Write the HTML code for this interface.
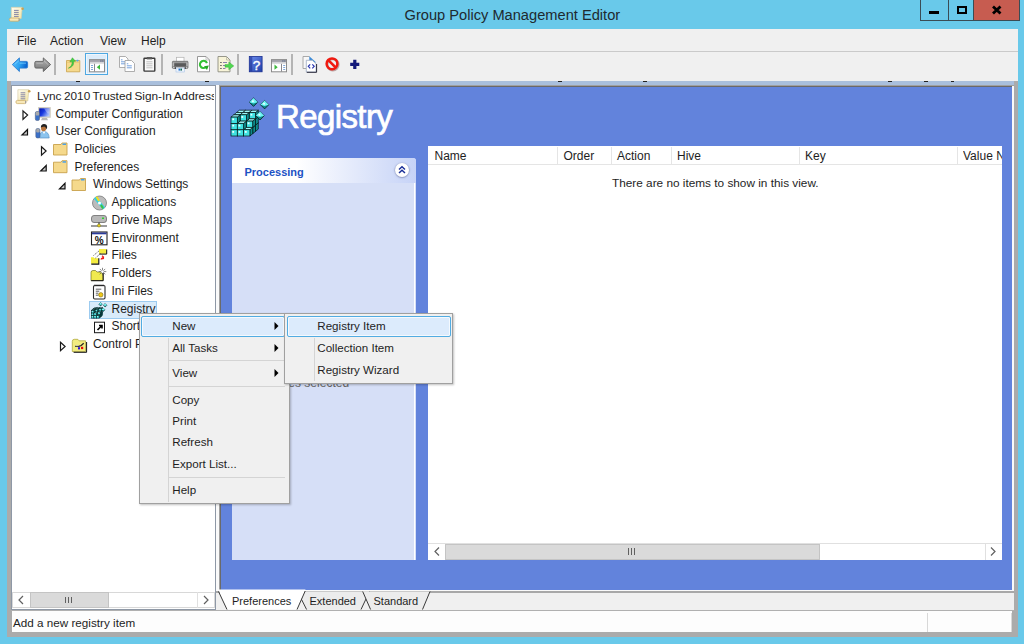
<!DOCTYPE html>
<html><head><meta charset="utf-8">
<style>
*{box-sizing:border-box;margin:0;padding:0}
html,body{width:1024px;height:644px;overflow:hidden;background:#69c9ea;font-family:"Liberation Sans",sans-serif;font-size:12px;color:#000}
.a{position:absolute}
.t{position:absolute;white-space:nowrap;line-height:14px;color:#1e1e1e}
svg{position:absolute;overflow:visible}
</style></head><body>
<!-- ============ TITLE BAR ============ -->
<svg style="left:0;top:0" width="30" height="29">
  <defs><linearGradient id="gsc" x1="0" y1="0" x2="1" y2="1"><stop offset="0" stop-color="#fffdf2"/><stop offset="1" stop-color="#f3e3a0"/></linearGradient></defs>
  <g id="scroll">
  <path d="M11.3 7.3 H22.3 L21.2 18.5 H11.3 Z" fill="url(#gsc)" stroke="#d9cfa8" stroke-width="0.7"/>
  <circle cx="22.6" cy="8.8" r="1.3" fill="#caa050"/>
  <rect x="9.3" y="18" width="10.2" height="3.2" rx="1.5" fill="#f7e8b8" stroke="#c9a860" stroke-width="0.7"/>
  <path d="M19 18.5 V21" stroke="#8a8aa0" stroke-width="0.8"/>
  <path d="M14 10.4h4.7 M14 12.4h4.7 M14 14.4h4.7 M14 16.4h4.7" stroke="#8585a5" stroke-width="1"/>
  </g>
</svg>
<div class="t" style="left:404.5px;top:5.6px;font-size:14.65px;line-height:18px;color:#1e2a30">Group Policy Management Editor</div>
<div class="a" style="left:920px;top:0;width:29px;height:21px;border:1px solid #3a4c55;border-top:none;background:#69c9ea"></div>
<div class="a" style="left:949px;top:0;width:25px;height:21px;border:1px solid #3a4c55;border-top:none;border-left:none;background:#69c9ea"></div>
<div class="a" style="left:974px;top:0;width:46px;height:21px;border:1px solid #3a4c55;border-top:none;border-left:none;background:#c75c50"></div>
<div class="a" style="left:929px;top:11px;width:10px;height:3px;background:#000"></div>
<div class="a" style="left:957px;top:6px;width:10px;height:8px;border:2px solid #000"></div>
<svg style="left:990px;top:5px" width="14" height="10"><path d="M3 1.5 L10.5 8.5 M10.5 1.5 L3 8.5" stroke="#000" stroke-width="2.8"/></svg>

<!-- ============ FRAME ============ -->
<div class="a" style="left:7px;top:29px;width:1011px;height:608px;background:#ababab"></div>
<!-- menu bar -->
<div class="a" style="left:7px;top:29px;width:1011px;height:22px;background:#f0f0f0"></div>
<div class="a" style="left:7px;top:51px;width:1011px;height:1.5px;background:#cacaca"></div>
<div class="t" style="left:17px;top:33.5px">File</div>
<div class="t" style="left:50px;top:33.5px">Action</div>
<div class="t" style="left:100px;top:33.5px">View</div>
<div class="t" style="left:141px;top:33.5px">Help</div>
<!-- toolbar -->
<div class="a" style="left:7px;top:52px;width:1011px;height:29px;background:#f0f0f0"></div>
<div class="a" style="left:11px;top:81px;width:1003px;height:4px;background:#a9bfdc"></div>
<div class="a" style="left:76px;top:81px;width:4px;height:1px;background:#222"></div>
<div class="a" style="left:205px;top:81px;width:4px;height:1px;background:#222"></div>
<div class="a" style="left:558px;top:81px;width:4px;height:1px;background:#222"></div>
<div class="a" style="left:643px;top:81px;width:4px;height:1px;background:#222"></div>
<div class="a" style="left:888px;top:81px;width:4px;height:1px;background:#222"></div>
<div class="a" style="left:924px;top:81px;width:4px;height:1px;background:#222"></div>
<div class="a" style="left:951px;top:81px;width:3px;height:1px;background:#222"></div>
<!-- separators -->
<div class="a" style="left:54px;top:54px;width:2px;height:21px;background:#b4b4b4"></div>
<div class="a" style="left:161px;top:54px;width:2px;height:21px;background:#b4b4b4"></div>
<div class="a" style="left:237px;top:54px;width:2px;height:21px;background:#b4b4b4"></div>
<div class="a" style="left:291px;top:54px;width:2px;height:21px;background:#b4b4b4"></div>
<!-- selected toolbar button -->
<div class="a" style="left:85px;top:53.2px;width:23px;height:21.8px;border:1.5px solid #4ea8e2;background:#dcecfa;box-shadow:inset 0 0 0 1px #eef6fd"></div>

<svg style="left:0;top:0" width="400" height="85">
  <defs>
    <linearGradient id="gb2" x1="0" y1="0" x2="1" y2="0.3"><stop offset="0" stop-color="#5cc4ff"/><stop offset="0.6" stop-color="#2aa0f0"/><stop offset="1" stop-color="#0a64d0"/></linearGradient>
    <linearGradient id="gg" x1="0" y1="0" x2="0" y2="1"><stop offset="0" stop-color="#b8b8b8"/><stop offset="1" stop-color="#707070"/></linearGradient>
    <linearGradient id="gh" x1="0" y1="0" x2="1" y2="1"><stop offset="0" stop-color="#6f8ff0"/><stop offset="1" stop-color="#1f3fa8"/></linearGradient>
  </defs>
  <!-- back -->
  <path d="M12.3 64.6 L19.4 57.9 V61.4 H26.3 Q27.6 61.4 27.6 62.7 V66.8 Q27.6 68.1 26.3 68.1 H19.4 V71.5 Z" fill="url(#gb2)" stroke="#2a7cd0" stroke-width="0.9"/>
  <path d="M15 64.2 L19 60.6 M19.6 63.2 H26" stroke="#8ad8ff" stroke-width="0.8" opacity="0.8"/>
  <!-- forward -->
  <path d="M50.6 64.6 L43.3 57.9 V61.4 H36.1 Q34.8 61.4 34.8 62.7 V66.8 Q34.8 68.1 36.1 68.1 H43.3 V71.5 Z" fill="url(#gg)" stroke="#5e5e5e" stroke-width="0.9"/>
  <path d="M36.5 63.3 H43 M44 61 L48 64.5" stroke="#c4c4c4" stroke-width="0.8" opacity="0.7"/>
  <!-- up folder -->
  <path d="M66.5 60.5 h13.3 v11.3 h-13.3 z" fill="#f6d98c" stroke="#c9a24a" stroke-width="0.8"/>
  <path d="M66.9 62.3 h12.5" stroke="#e8c470" stroke-width="0.8"/>
  <rect x="76.3" y="59.7" width="2.4" height="1.7" rx="0.8" fill="#58a8e8"/>
  <path d="M68.3 68.2 C70.8 66.8, 72.4 65, 72 61.6 L69.8 62 L72.4 57.7 L75.6 61.3 L73.5 61.5 C74.2 65.5, 71.5 67.6, 68.3 68.2 Z" fill="#44d044" stroke="#2a9a2a" stroke-width="0.4"/>
  <!-- window w/ left triangle -->
  <rect x="89.5" y="59.6" width="15" height="12.2" fill="#fff" stroke="#8a8a8a" stroke-width="1"/>
  <rect x="90" y="60.1" width="14" height="1.8" fill="#9a9aa2"/>
  <rect x="90" y="61.9" width="14" height="1.8" fill="#d4d4d8"/>
  <rect x="100.3" y="60.4" width="1.2" height="1.2" fill="#5a6a8a"/><rect x="102.2" y="60.4" width="1.2" height="1.2" fill="#5a6a8a"/>
  <path d="M94.5 63.8 V71.5" stroke="#7a7a82" stroke-width="0.9"/>
  <path d="M91 65.5h2 M91 67.5h2 M91 69.5h2" stroke="#5b8fd0" stroke-width="0.8"/>
  <path d="M100 64.5 V69.8 L96.8 67.2 Z" fill="#3cb83c"/>
  <!-- copy -->
  <path d="M119.5 56.5 h6 l2.5 2.5 v8.5 h-8.5 z" fill="#fff" stroke="#9a9a9a" stroke-width="0.8"/>
  <path d="M121 59.8h1.5 M121 61.8h4 M121 63.8h4" stroke="#3a7ad0" stroke-width="0.7"/>
  <path d="M125 60.5 h6.5 l3 3 v8 h-9.5 z" fill="#fff" stroke="#9a9a9a" stroke-width="0.8"/>
  <path d="M126.8 63.8h1.5 M126.8 65.8h5 M126.8 67.8h5" stroke="#3a7ad0" stroke-width="0.7"/>
  <!-- paste clipboard -->
  <rect x="144" y="58.3" width="10.8" height="12.8" rx="0.5" fill="#fafafa" stroke="#383838" stroke-width="1.4"/>
  <rect x="146.8" y="57" width="5.2" height="2.4" fill="#5a5a5a"/>
  <path d="M146.3 61.8h6.2 M146.3 63.8h6.2 M146.3 65.8h6.2 M146.3 67.8h6.2" stroke="#a8a8a8" stroke-width="0.7"/>
  <!-- printer -->
  <rect x="176.5" y="57.3" width="7.5" height="4.5" fill="#fff" stroke="#b0b0b0" stroke-width="0.7"/>
  <rect x="172.3" y="61.2" width="15.8" height="7.2" rx="0.8" fill="#5a5a5a" stroke="#6a6a6a" stroke-width="0.5"/>
  <rect x="173" y="61.6" width="14.4" height="1.6" fill="#9a9a9a"/>
  <rect x="172.6" y="62.5" width="1.6" height="4" fill="#b8b8b8"/><rect x="186.2" y="62.5" width="1.6" height="4" fill="#b8b8b8"/>
  <rect x="173" y="66.8" width="14.4" height="1.4" fill="#c8c8c8"/>
  <rect x="176" y="68" width="8.5" height="4" fill="#eef4fc" stroke="#a8c4e8" stroke-width="0.6"/>
  <rect x="178.5" y="68.6" width="1.6" height="2" fill="#2a7ad0"/><rect x="180.4" y="68.6" width="1.6" height="2" fill="#1a6a5a"/>
  <circle cx="175.3" cy="68" r="0.7" fill="#111"/><circle cx="185.2" cy="68" r="0.7" fill="#111"/>
  <!-- refresh doc -->
  <path d="M197.5 56.5 h8.5 l3.5 3.5 v11.8 h-12 z" fill="#fff" stroke="#8c8c8c" stroke-width="0.9"/>
  <path d="M206 56.5 v3.5 h3.5" fill="none" stroke="#b0b0b0" stroke-width="0.7"/>
  <path d="M205.8 67.2 A3.6 3.6 0 1 1 206.9 63.2" fill="none" stroke="#34c034" stroke-width="2.1"/>
  <path d="M204 66.2 L208.8 65.6 L207 70 Z" fill="#22a822"/>
  <!-- export list -->
  <path d="M218 56.5 h8.5 l3.5 3.5 v11.8 h-12 z" fill="#f8f4d8" stroke="#8c8c80" stroke-width="0.9"/>
  <path d="M226.5 56.5 v3.5 h3.5" fill="none" stroke="#b0b0a0" stroke-width="0.7"/>
  <path d="M220.3 62.5h1.3 M220.3 65.5h1.3 M220.3 68.5h1.3" stroke="#444" stroke-width="1"/>
  <path d="M223 62.5h4 M223 65.5h2.5 M223 68.5h2.5" stroke="#8a80b0" stroke-width="1"/>
  <path d="M225 64.6 h3.8 v-2.6 l5 3.9 l-5 3.9 v-2.6 h-3.8 z" fill="#50d850" stroke="#2aa02a" stroke-width="0.4"/>
  <!-- help book -->
  <rect x="249.3" y="56.5" width="12.8" height="15.3" fill="url(#gh)" stroke="#1a2f90" stroke-width="0.8"/>
  <rect x="249.7" y="56.9" width="2.6" height="14.5" fill="#16288a" opacity="0.55"/>
  <text x="256.6" y="69.6" font-family="Liberation Sans" font-size="13.5" stroke="#fff" stroke-width="0.4" fill="#fff" text-anchor="middle">?</text>
  <!-- action pane -->
  <rect x="271.5" y="59.6" width="15" height="12.2" fill="#fff" stroke="#8a8a8a" stroke-width="1"/>
  <rect x="272" y="60.1" width="14" height="1.8" fill="#9a9aa2"/>
  <rect x="272" y="61.9" width="14" height="1.8" fill="#d4d4d8"/>
  <rect x="282.3" y="60.4" width="1.2" height="1.2" fill="#5a6a8a"/><rect x="284.2" y="60.4" width="1.2" height="1.2" fill="#5a6a8a"/>
  <path d="M281.5 63.8 V71.5" stroke="#7a7a82" stroke-width="0.9"/>
  <path d="M283.2 65.5h2 M283.2 67.5h2 M283.2 69.5h2" stroke="#5b8fd0" stroke-width="0.8"/>
  <path d="M274.5 64.5 V69.8 L277.7 67.2 Z" fill="#3cb83c"/>
  <!-- doc <> -->
  <path d="M306 68.5 h-3 V56.5 h6.5" fill="#f8f8f8" stroke="#a0a0a0" stroke-width="0.9"/>
  <path d="M309.3 56.3 L316.2 62.5 H309.3 Z" fill="#3a8ad8"/>
  <path d="M306.3 60.3 h6 l3.8 3.5 v8.2 h-9.8 z" fill="#fff" stroke="#9aa8c0" stroke-width="0.8"/>
  <path d="M306.8 72.3 h9.8 v-8.3" fill="none" stroke="#2a2a3a" stroke-width="1"/>
  <path d="M310.2 64.3 l-1.9 2 l1.9 2 M312.3 64.3 l1.9 2 l-1.9 2" fill="none" stroke="#2a36b0" stroke-width="1.2"/>
  <!-- red stop -->
  <circle cx="332.8" cy="64.6" r="5.6" fill="none" stroke="#7a4a4a" stroke-width="2.4" opacity="0.45"/>
  <circle cx="332" cy="63.8" r="5.4" fill="none" stroke="#f01a10" stroke-width="2.5"/>
  <path d="M328.3 60.1 L335.7 67.5" stroke="#f01a10" stroke-width="2.5"/>
  <!-- plus -->
  <path d="M350.2 64.3 H359.3 M354.8 59.8 V68.9" stroke="#141a7a" stroke-width="3.2"/>
</svg>

<!-- ============ LEFT PANE ============ -->
<div class="a" style="left:11px;top:85px;width:205px;height:525px;background:#fff;border:1px solid #8e98a6"></div>
<div class="a" style="left:216px;top:85px;width:3px;height:526px;background:#fafafa"></div>

<!-- tree -->
<div id="tree">
<div class="t" style="left:37px;top:88.9px;width:177px;overflow:hidden;font-size:11.8px;word-spacing:-0.8px">Lync 2010 Trusted Sign-In Address</div>
<div class="t" style="left:55.5px;top:106.5px">Computer Configuration</div>
<div class="t" style="left:55.5px;top:124.2px">User Configuration</div>
<div class="t" style="left:74.5px;top:141.9px">Policies</div>
<div class="t" style="left:74.5px;top:159.6px">Preferences</div>
<div class="t" style="left:93px;top:177.3px">Windows Settings</div>
<div class="t" style="left:111.5px;top:195.1px">Applications</div>
<div class="t" style="left:111.5px;top:212.8px">Drive Maps</div>
<div class="t" style="left:111.5px;top:230.5px">Environment</div>
<div class="t" style="left:111.5px;top:248.2px">Files</div>
<div class="t" style="left:111.5px;top:266px">Folders</div>
<div class="t" style="left:111.5px;top:283.7px">Ini Files</div>
<div class="a" style="left:89px;top:301px;width:68px;height:17.5px;background:#d9ebfa;border:1px solid #9ccbf0"></div>
<div class="t" style="left:111.5px;top:301.5px">Registry</div>
<div class="t" style="left:111.5px;top:319.1px">Shortcuts</div>
<div class="t" style="left:93px;top:336.9px">Control Panel Settings</div>
</div>

<svg style="left:0;top:0" width="220" height="360">
  <!-- expanders -->
  <path d="M23 110.9 L27.6 115.1 L23 119.3 Z" fill="none" stroke="#1a1a1a" stroke-width="1.2"/>
  <path d="M27.5 129.5 V135 H22 Z" fill="#c8c8c8" stroke="#111" stroke-width="1.2"/>
  <path d="M41.5 146.8 L46.1 151 L41.5 155.2 Z" fill="none" stroke="#1a1a1a" stroke-width="1.2"/>
  <path d="M46.2 165.5 V171 H40.7 Z" fill="#c8c8c8" stroke="#111" stroke-width="1.2"/>
  <path d="M65 183.3 V188.8 H59.5 Z" fill="#c8c8c8" stroke="#111" stroke-width="1.2"/>
  <path d="M60.5 342.3 L65.1 346.5 L60.5 350.7 Z" fill="none" stroke="#1a1a1a" stroke-width="1.2"/>
  <!-- scroll icon -->
  <use href="#scroll" x="6.6" y="82.4"/>
  <!-- computer -->
  <defs><linearGradient id="gscr" x1="0" y1="0" x2="1" y2="0.6"><stop offset="0" stop-color="#0010a8"/><stop offset="0.5" stop-color="#1a3ae0"/><stop offset="1" stop-color="#b0c8ff"/></linearGradient></defs>
  <rect x="38.6" y="107.7" width="11.6" height="9.5" fill="url(#gscr)" stroke="#d4d0c0" stroke-width="1.2"/>
  <path d="M44 108.5 l3.5 5 h2 v-5z" fill="#fff" opacity="0.35"/>
  <path d="M42 118 h5 l1 2.2 h-7z" fill="#b8b8b8"/>
  <rect x="35.3" y="111.5" width="4.2" height="9" rx="1.6" fill="#3a70c8" stroke="#4a5a78" stroke-width="0.5"/>
  <rect x="35.7" y="111.8" width="3.4" height="3.8" rx="1.2" fill="#a8a8a8"/>
  <!-- user -->
  <path d="M39.5 138 q-0.5 -6 4.5 -6.8 q5 0.8 5.2 6.8 z" fill="#8cc4ee" stroke="#4a88c0" stroke-width="0.6"/>
  <path d="M42.5 131.5 l1.5 2.5 l1.5 -2.5" fill="#fff"/>
  <ellipse cx="43.6" cy="128" rx="2.6" ry="3.2" fill="#b8743c"/>
  <path d="M40.8 127.5 q0.2 -3.6 3.2 -3.6 q3 0 3.2 3.2 l-0.6 2.4 q-0.6 -2.6 -2.4 -3 q-2 0.4 -3.4 1z" fill="#222"/>
  <rect x="35.8" y="128.5" width="4.2" height="9.5" rx="1.6" fill="#3a70c8" stroke="#4a5a78" stroke-width="0.5"/>
  <rect x="36.2" y="128.8" width="3.4" height="3.6" rx="1.2" fill="#a8a8a8"/>
  <!-- folders -->
  <g id="fold">
  <path d="M53.5 144.5 h7.5 l1 -1.5 h5 v12 h-13.5 z" fill="#f5d98c" stroke="#c8a24c" stroke-width="0.9"/>
  <rect x="62.5" y="143.5" width="3.5" height="1.5" fill="#4aa0e8"/>
  </g>
  <use href="#fold" y="17.7"/>
  <use href="#fold" x="18.5" y="35.5"/>
  <!-- CD -->
  <circle cx="99.5" cy="203" r="7" fill="#bcbcbc" stroke="#7a7a7a" stroke-width="0.8"/>
  <path d="M95 197.5 L104 208.5" stroke="#36d0e0" stroke-width="3"/>
  <path d="M96.5 196.8 L99 201" stroke="#f0e020" stroke-width="2"/>
  <path d="M101 205 L103 208.5" stroke="#40c040" stroke-width="2"/>
  <circle cx="99.5" cy="203" r="1.5" fill="#fff"/>
  <!-- drive maps -->
  <rect x="91.5" y="215.5" width="15" height="7" rx="2.5" fill="#b8b8b8" stroke="#6a6a6a" stroke-width="0.8"/>
  <rect x="102" y="217.5" width="2" height="1.5" fill="#30d030"/>
  <path d="M99 222.5 V225 M91 226 H107" stroke="#3a3a3a" stroke-width="1.2"/>
  <circle cx="99" cy="225.5" r="1.6" fill="#e8d020" stroke="#6a6a20" stroke-width="0.5"/>
  <!-- environment -->
  <rect x="91.5" y="232" width="15.5" height="12.8" fill="#fff" stroke="#222" stroke-width="1.1"/>
  <rect x="92" y="232.5" width="14.5" height="1.8" fill="#2a3a9a"/>
  <text x="99.3" y="243.8" font-family="Liberation Sans" font-size="10" font-weight="bold" fill="#111" text-anchor="middle">%</text>
  <!-- files -->
  <path d="M99 249 h7.5 v4.8 h-7.5 z" fill="#f4ec40"/>
  <path d="M106.7 249.5 v4.6 h-7.5" fill="none" stroke="#111" stroke-width="1"/>
  <path d="M91 257.3 h2.5 l1 1 h4 v5.5 h-7.5 z" fill="#f4ec40"/>
  <path d="M98.8 258.3 v5.8 h-7.5" fill="none" stroke="#111" stroke-width="1.1"/>
  <path d="M93.5 255.5 L99.5 250.5 M95.5 258 L100.5 253.5" stroke="#444" stroke-width="0.9" stroke-dasharray="1 1"/>
  <path d="M101 259 l2 -1.5 M102 255.8 l1.5 1.2 l-1.5 1.8 l2 -0.5" fill="none" stroke="#f01818" stroke-width="1.2"/>
  <!-- folders sparkle -->
  <path d="M91 272.5 q0 -2 2 -2 h2.5 l1.5 1.5 h3.5 l2.5 2 v6.6 h-12 z" fill="#f0ea50" stroke="#5a5a10" stroke-width="0.6"/>
  <path d="M103.2 272.5 v8.2 h-12" fill="none" stroke="#111" stroke-width="1"/>
  <path d="M102.5 267.8 v7.6 M98.7 271.6 h7.6 M99.8 268.9 l5.4 5.4 M105.2 268.9 l-5.4 5.4" stroke="#555" stroke-width="0.7"/>
  <circle cx="102.5" cy="271.6" r="1.3" fill="#fff"/>
  <!-- ini files -->
  <rect x="93.5" y="285.5" width="11.5" height="13.5" rx="1.2" fill="#fff" stroke="#2a2a2a" stroke-width="1.1"/>
  <path d="M95 284.3 v2.2 M97 284.3 v2.2 M99 284.3 v2.2 M101 284.3 v2.2 M103 284.3 v2.2" stroke="#2a2a2a" stroke-width="0.7"/>
  <path d="M95.8 289.2h5.5 M95.8 291.2h3.5 M95.8 293.2h2.5 M95.8 295.2h2.5" stroke="#333" stroke-width="0.8"/>
  <circle cx="100.8" cy="294.8" r="2.2" fill="#f0c818" stroke="#7a6a10" stroke-width="0.6"/>
  <!-- shortcut -->
  <rect x="94.5" y="322.2" width="10" height="10.5" fill="#fff" stroke="#1a1a1a" stroke-width="1"/>
  <path d="M97.5 330 L101.5 326 M99 325.5 h3 v3" stroke="#000" stroke-width="1.6" fill="none"/>
  <!-- control panel folder -->
  <path d="M72.3 341.5 q0 -2.2 2 -2.2 h3.5 l1.2 1.5 h6.5 v10.7 h-13.2 z" fill="#f2ec80" stroke="#a8a030" stroke-width="0.7"/>
  <path d="M86.6 342 v10.3 h-13" fill="none" stroke="#111" stroke-width="1"/>
  <path d="M75.2 346.3 h3.5 l2.5 -0.8 l2.5 -2.2" fill="none" stroke="#222" stroke-width="1.3"/>
  <path d="M76 345.8 h2.5" stroke="#ddd" stroke-width="0.7"/>
  <rect x="78" y="347.2" width="2" height="2.2" fill="#2a10e0"/>
  <rect x="81" y="346.8" width="2.2" height="2.3" fill="#e80a0a"/>
</svg>

<!-- registry small icon -->
<svg style="left:0;top:0" width="120" height="320"><defs><g id="regsmall">
<path d="M16.90 37.40 L19.70 35.10 V28.80 L16.90 31.10 Z" fill="#0f8c8c" stroke="#031414" stroke-width="1.3"/>
<path d="M10.60 31.10 H16.90 L19.70 28.80 H13.40 Z" fill="#9ef8f8" stroke="#031414" stroke-width="1.3"/>
<rect x="10.60" y="31.10" width="6.30" height="6.30" fill="#3fe0e0" stroke="#031414" stroke-width="1.3"/>
<rect x="11.90" y="32.40" width="1.8" height="1.8" fill="#e8ffff"/>
<path d="M23.20 37.40 L26.00 35.10 V28.80 L23.20 31.10 Z" fill="#0f8c8c" stroke="#031414" stroke-width="1.3"/>
<path d="M16.90 31.10 H23.20 L26.00 28.80 H19.70 Z" fill="#9ef8f8" stroke="#031414" stroke-width="1.3"/>
<rect x="16.90" y="31.10" width="6.30" height="6.30" fill="#3fe0e0" stroke="#031414" stroke-width="1.3"/>
<rect x="18.20" y="32.40" width="1.8" height="1.8" fill="#e8ffff"/>
<path d="M29.50 37.40 L32.30 35.10 V28.80 L29.50 31.10 Z" fill="#0f8c8c" stroke="#031414" stroke-width="1.3"/>
<path d="M23.20 31.10 H29.50 L32.30 28.80 H26.00 Z" fill="#9ef8f8" stroke="#031414" stroke-width="1.3"/>
<rect x="23.20" y="31.10" width="6.30" height="6.30" fill="#3fe0e0" stroke="#031414" stroke-width="1.3"/>
<rect x="24.50" y="32.40" width="1.8" height="1.8" fill="#e8ffff"/>
<path d="M16.90 31.10 L19.70 28.80 V22.50 L16.90 24.80 Z" fill="#0f8c8c" stroke="#031414" stroke-width="1.3"/>
<path d="M10.60 24.80 H16.90 L19.70 22.50 H13.40 Z" fill="#9ef8f8" stroke="#031414" stroke-width="1.3"/>
<rect x="10.60" y="24.80" width="6.30" height="6.30" fill="#3fe0e0" stroke="#031414" stroke-width="1.3"/>
<rect x="11.90" y="26.10" width="1.8" height="1.8" fill="#e8ffff"/>
<path d="M23.20 31.10 L26.00 28.80 V22.50 L23.20 24.80 Z" fill="#0f8c8c" stroke="#031414" stroke-width="1.3"/>
<path d="M16.90 24.80 H23.20 L26.00 22.50 H19.70 Z" fill="#9ef8f8" stroke="#031414" stroke-width="1.3"/>
<rect x="16.90" y="24.80" width="6.30" height="6.30" fill="#3fe0e0" stroke="#031414" stroke-width="1.3"/>
<rect x="18.20" y="26.10" width="1.8" height="1.8" fill="#e8ffff"/>
<path d="M29.50 31.10 L32.30 28.80 V22.50 L29.50 24.80 Z" fill="#0f8c8c" stroke="#031414" stroke-width="1.3"/>
<path d="M23.20 24.80 H29.50 L32.30 22.50 H26.00 Z" fill="#9ef8f8" stroke="#031414" stroke-width="1.3"/>
<rect x="23.20" y="24.80" width="6.30" height="6.30" fill="#3fe0e0" stroke="#031414" stroke-width="1.3"/>
<rect x="24.50" y="26.10" width="1.8" height="1.8" fill="#e8ffff"/>
<path d="M16.90 24.80 L19.70 22.50 V16.20 L16.90 18.50 Z" fill="#0f8c8c" stroke="#031414" stroke-width="1.3"/>
<path d="M10.60 18.50 H16.90 L19.70 16.20 H13.40 Z" fill="#9ef8f8" stroke="#031414" stroke-width="1.3"/>
<rect x="10.60" y="18.50" width="6.30" height="6.30" fill="#3fe0e0" stroke="#031414" stroke-width="1.3"/>
<rect x="11.90" y="19.80" width="1.8" height="1.8" fill="#e8ffff"/>
<path d="M23.20 24.80 L26.00 22.50 V16.20 L23.20 18.50 Z" fill="#0f8c8c" stroke="#031414" stroke-width="1.3"/>
<path d="M16.90 18.50 H23.20 L26.00 16.20 H19.70 Z" fill="#9ef8f8" stroke="#031414" stroke-width="1.3"/>
<rect x="16.90" y="18.50" width="6.30" height="6.30" fill="#3fe0e0" stroke="#031414" stroke-width="1.3"/>
<rect x="18.20" y="19.80" width="1.8" height="1.8" fill="#e8ffff"/>
<path d="M29.50 24.80 L32.30 22.50 V16.20 L29.50 18.50 Z" fill="#0f8c8c" stroke="#031414" stroke-width="1.3"/>
<path d="M23.20 18.50 H29.50 L32.30 16.20 H26.00 Z" fill="#9ef8f8" stroke="#031414" stroke-width="1.3"/>
<rect x="23.20" y="18.50" width="6.30" height="6.30" fill="#3fe0e0" stroke="#031414" stroke-width="1.3"/>
<rect x="24.50" y="19.80" width="1.8" height="1.8" fill="#e8ffff"/>
<path d="M14.10 39.70 L16.90 37.40 V31.10 L14.10 33.40 Z" fill="#0f8c8c" stroke="#031414" stroke-width="1.3"/>
<path d="M7.80 33.40 H14.10 L16.90 31.10 H10.60 Z" fill="#9ef8f8" stroke="#031414" stroke-width="1.3"/>
<rect x="7.80" y="33.40" width="6.30" height="6.30" fill="#3fe0e0" stroke="#031414" stroke-width="1.3"/>
<rect x="9.10" y="34.70" width="1.8" height="1.8" fill="#e8ffff"/>
<path d="M20.40 39.70 L23.20 37.40 V31.10 L20.40 33.40 Z" fill="#0f8c8c" stroke="#031414" stroke-width="1.3"/>
<path d="M14.10 33.40 H20.40 L23.20 31.10 H16.90 Z" fill="#9ef8f8" stroke="#031414" stroke-width="1.3"/>
<rect x="14.10" y="33.40" width="6.30" height="6.30" fill="#3fe0e0" stroke="#031414" stroke-width="1.3"/>
<rect x="15.40" y="34.70" width="1.8" height="1.8" fill="#e8ffff"/>
<path d="M26.70 39.70 L29.50 37.40 V31.10 L26.70 33.40 Z" fill="#0f8c8c" stroke="#031414" stroke-width="1.3"/>
<path d="M20.40 33.40 H26.70 L29.50 31.10 H23.20 Z" fill="#9ef8f8" stroke="#031414" stroke-width="1.3"/>
<rect x="20.40" y="33.40" width="6.30" height="6.30" fill="#3fe0e0" stroke="#031414" stroke-width="1.3"/>
<rect x="21.70" y="34.70" width="1.8" height="1.8" fill="#e8ffff"/>
<path d="M14.10 33.40 L16.90 31.10 V24.80 L14.10 27.10 Z" fill="#0f8c8c" stroke="#031414" stroke-width="1.3"/>
<path d="M7.80 27.10 H14.10 L16.90 24.80 H10.60 Z" fill="#9ef8f8" stroke="#031414" stroke-width="1.3"/>
<rect x="7.80" y="27.10" width="6.30" height="6.30" fill="#3fe0e0" stroke="#031414" stroke-width="1.3"/>
<rect x="9.10" y="28.40" width="1.8" height="1.8" fill="#e8ffff"/>
<path d="M20.40 33.40 L23.20 31.10 V24.80 L20.40 27.10 Z" fill="#0f8c8c" stroke="#031414" stroke-width="1.3"/>
<path d="M14.10 27.10 H20.40 L23.20 24.80 H16.90 Z" fill="#9ef8f8" stroke="#031414" stroke-width="1.3"/>
<rect x="14.10" y="27.10" width="6.30" height="6.30" fill="#3fe0e0" stroke="#031414" stroke-width="1.3"/>
<rect x="15.40" y="28.40" width="1.8" height="1.8" fill="#e8ffff"/>
<path d="M26.70 33.40 L29.50 31.10 V24.80 L26.70 27.10 Z" fill="#0f8c8c" stroke="#031414" stroke-width="1.3"/>
<path d="M20.40 27.10 H26.70 L29.50 24.80 H23.20 Z" fill="#9ef8f8" stroke="#031414" stroke-width="1.3"/>
<rect x="20.40" y="27.10" width="6.30" height="6.30" fill="#3fe0e0" stroke="#031414" stroke-width="1.3"/>
<rect x="21.70" y="28.40" width="1.8" height="1.8" fill="#e8ffff"/>
<path d="M14.10 27.10 L16.90 24.80 V18.50 L14.10 20.80 Z" fill="#0f8c8c" stroke="#031414" stroke-width="1.3"/>
<path d="M7.80 20.80 H14.10 L16.90 18.50 H10.60 Z" fill="#9ef8f8" stroke="#031414" stroke-width="1.3"/>
<rect x="7.80" y="20.80" width="6.30" height="6.30" fill="#3fe0e0" stroke="#031414" stroke-width="1.3"/>
<rect x="9.10" y="22.10" width="1.8" height="1.8" fill="#e8ffff"/>
<path d="M20.40 27.10 L23.20 24.80 V18.50 L20.40 20.80 Z" fill="#0f8c8c" stroke="#031414" stroke-width="1.3"/>
<path d="M14.10 20.80 H20.40 L23.20 18.50 H16.90 Z" fill="#9ef8f8" stroke="#031414" stroke-width="1.3"/>
<rect x="14.10" y="20.80" width="6.30" height="6.30" fill="#3fe0e0" stroke="#031414" stroke-width="1.3"/>
<rect x="15.40" y="22.10" width="1.8" height="1.8" fill="#e8ffff"/>
<path d="M11.30 42.00 L14.10 39.70 V33.40 L11.30 35.70 Z" fill="#0f8c8c" stroke="#031414" stroke-width="1.3"/>
<path d="M5.00 35.70 H11.30 L14.10 33.40 H7.80 Z" fill="#9ef8f8" stroke="#031414" stroke-width="1.3"/>
<rect x="5.00" y="35.70" width="6.30" height="6.30" fill="#3fe0e0" stroke="#031414" stroke-width="1.3"/>
<rect x="6.30" y="37.00" width="1.8" height="1.8" fill="#e8ffff"/>
<path d="M17.60 42.00 L20.40 39.70 V33.40 L17.60 35.70 Z" fill="#0f8c8c" stroke="#031414" stroke-width="1.3"/>
<path d="M11.30 35.70 H17.60 L20.40 33.40 H14.10 Z" fill="#9ef8f8" stroke="#031414" stroke-width="1.3"/>
<rect x="11.30" y="35.70" width="6.30" height="6.30" fill="#3fe0e0" stroke="#031414" stroke-width="1.3"/>
<rect x="12.60" y="37.00" width="1.8" height="1.8" fill="#e8ffff"/>
<path d="M23.90 42.00 L26.70 39.70 V33.40 L23.90 35.70 Z" fill="#0f8c8c" stroke="#031414" stroke-width="1.3"/>
<path d="M17.60 35.70 H23.90 L26.70 33.40 H20.40 Z" fill="#9ef8f8" stroke="#031414" stroke-width="1.3"/>
<rect x="17.60" y="35.70" width="6.30" height="6.30" fill="#3fe0e0" stroke="#031414" stroke-width="1.3"/>
<rect x="18.90" y="37.00" width="1.8" height="1.8" fill="#e8ffff"/>
<path d="M11.30 35.70 L14.10 33.40 V27.10 L11.30 29.40 Z" fill="#0f8c8c" stroke="#031414" stroke-width="1.3"/>
<path d="M5.00 29.40 H11.30 L14.10 27.10 H7.80 Z" fill="#9ef8f8" stroke="#031414" stroke-width="1.3"/>
<rect x="5.00" y="29.40" width="6.30" height="6.30" fill="#3fe0e0" stroke="#031414" stroke-width="1.3"/>
<rect x="6.30" y="30.70" width="1.8" height="1.8" fill="#e8ffff"/>
<path d="M17.60 35.70 L20.40 33.40 V27.10 L17.60 29.40 Z" fill="#0f8c8c" stroke="#031414" stroke-width="1.3"/>
<path d="M11.30 29.40 H17.60 L20.40 27.10 H14.10 Z" fill="#9ef8f8" stroke="#031414" stroke-width="1.3"/>
<rect x="11.30" y="29.40" width="6.30" height="6.30" fill="#3fe0e0" stroke="#031414" stroke-width="1.3"/>
<rect x="12.60" y="30.70" width="1.8" height="1.8" fill="#e8ffff"/>
<path d="M11.30 29.40 L14.10 27.10 V20.80 L11.30 23.10 Z" fill="#0f8c8c" stroke="#031414" stroke-width="1.3"/>
<path d="M5.00 23.10 H11.30 L14.10 20.80 H7.80 Z" fill="#9ef8f8" stroke="#031414" stroke-width="1.3"/>
<rect x="5.00" y="23.10" width="6.30" height="6.30" fill="#3fe0e0" stroke="#031414" stroke-width="1.3"/>
<rect x="6.30" y="24.40" width="1.8" height="1.8" fill="#e8ffff"/>
<path d="M27.50 4.00 L31.70 8.20 L27.50 12.40 L23.30 8.20 Z" fill="#0f8c8c" stroke="#031414" stroke-width="1.3"/>
<path d="M27.50 4.00 L31.70 8.20 L27.50 9.40 L23.30 8.20 Z" fill="#6ef4f4"/>
<circle cx="26.90" cy="7.20" r="1" fill="#e8ffff"/>
<path d="M38.60 6.50 L42.80 10.70 L38.60 14.90 L34.40 10.70 Z" fill="#0f8c8c" stroke="#031414" stroke-width="1.3"/>
<path d="M38.60 6.50 L42.80 10.70 L38.60 11.90 L34.40 10.70 Z" fill="#6ef4f4"/>
<circle cx="38.00" cy="9.70" r="1" fill="#e8ffff"/>
<path d="M34.00 17.60 L38.20 21.80 L34.00 26.00 L29.80 21.80 Z" fill="#0f8c8c" stroke="#031414" stroke-width="1.3"/>
<path d="M34.00 17.60 L38.20 21.80 L34.00 23.00 L29.80 21.80 Z" fill="#6ef4f4"/>
<circle cx="33.40" cy="20.80" r="1" fill="#e8ffff"/>
</g></defs><use href="#regsmall" transform="translate(89.3,300.9) scale(0.41)"/></svg>

<!-- ============ RIGHT PANE ============ -->
<div class="a" style="left:219px;top:85px;width:795px;height:505px;background:#fafafa;border-left:1px solid #a0a0a0;border-top:1px solid #a0a0a0"></div>
<div class="a" style="left:220px;top:86px;width:792px;height:503.5px;background:#6283dc;border-top:1px solid #6a6a6a;border-left:1px solid #6a6a6a"></div>
<!-- big registry icon -->
<svg style="left:226px;top:94px" width="48" height="46">
<g id="regicon">
<path d="M16.90 37.40 L19.70 35.10 V28.80 L16.90 31.10 Z" fill="#0f8c8c" stroke="#031414" stroke-width="0.7"/>
<path d="M10.60 31.10 H16.90 L19.70 28.80 H13.40 Z" fill="#9ef8f8" stroke="#031414" stroke-width="0.7"/>
<rect x="10.60" y="31.10" width="6.30" height="6.30" fill="#3fe0e0" stroke="#031414" stroke-width="0.7"/>
<rect x="11.90" y="32.40" width="1.8" height="1.8" fill="#e8ffff"/>
<path d="M23.20 37.40 L26.00 35.10 V28.80 L23.20 31.10 Z" fill="#0f8c8c" stroke="#031414" stroke-width="0.7"/>
<path d="M16.90 31.10 H23.20 L26.00 28.80 H19.70 Z" fill="#9ef8f8" stroke="#031414" stroke-width="0.7"/>
<rect x="16.90" y="31.10" width="6.30" height="6.30" fill="#3fe0e0" stroke="#031414" stroke-width="0.7"/>
<rect x="18.20" y="32.40" width="1.8" height="1.8" fill="#e8ffff"/>
<path d="M29.50 37.40 L32.30 35.10 V28.80 L29.50 31.10 Z" fill="#0f8c8c" stroke="#031414" stroke-width="0.7"/>
<path d="M23.20 31.10 H29.50 L32.30 28.80 H26.00 Z" fill="#9ef8f8" stroke="#031414" stroke-width="0.7"/>
<rect x="23.20" y="31.10" width="6.30" height="6.30" fill="#3fe0e0" stroke="#031414" stroke-width="0.7"/>
<rect x="24.50" y="32.40" width="1.8" height="1.8" fill="#e8ffff"/>
<path d="M16.90 31.10 L19.70 28.80 V22.50 L16.90 24.80 Z" fill="#0f8c8c" stroke="#031414" stroke-width="0.7"/>
<path d="M10.60 24.80 H16.90 L19.70 22.50 H13.40 Z" fill="#9ef8f8" stroke="#031414" stroke-width="0.7"/>
<rect x="10.60" y="24.80" width="6.30" height="6.30" fill="#3fe0e0" stroke="#031414" stroke-width="0.7"/>
<rect x="11.90" y="26.10" width="1.8" height="1.8" fill="#e8ffff"/>
<path d="M23.20 31.10 L26.00 28.80 V22.50 L23.20 24.80 Z" fill="#0f8c8c" stroke="#031414" stroke-width="0.7"/>
<path d="M16.90 24.80 H23.20 L26.00 22.50 H19.70 Z" fill="#9ef8f8" stroke="#031414" stroke-width="0.7"/>
<rect x="16.90" y="24.80" width="6.30" height="6.30" fill="#3fe0e0" stroke="#031414" stroke-width="0.7"/>
<rect x="18.20" y="26.10" width="1.8" height="1.8" fill="#e8ffff"/>
<path d="M29.50 31.10 L32.30 28.80 V22.50 L29.50 24.80 Z" fill="#0f8c8c" stroke="#031414" stroke-width="0.7"/>
<path d="M23.20 24.80 H29.50 L32.30 22.50 H26.00 Z" fill="#9ef8f8" stroke="#031414" stroke-width="0.7"/>
<rect x="23.20" y="24.80" width="6.30" height="6.30" fill="#3fe0e0" stroke="#031414" stroke-width="0.7"/>
<rect x="24.50" y="26.10" width="1.8" height="1.8" fill="#e8ffff"/>
<path d="M16.90 24.80 L19.70 22.50 V16.20 L16.90 18.50 Z" fill="#0f8c8c" stroke="#031414" stroke-width="0.7"/>
<path d="M10.60 18.50 H16.90 L19.70 16.20 H13.40 Z" fill="#9ef8f8" stroke="#031414" stroke-width="0.7"/>
<rect x="10.60" y="18.50" width="6.30" height="6.30" fill="#3fe0e0" stroke="#031414" stroke-width="0.7"/>
<rect x="11.90" y="19.80" width="1.8" height="1.8" fill="#e8ffff"/>
<path d="M23.20 24.80 L26.00 22.50 V16.20 L23.20 18.50 Z" fill="#0f8c8c" stroke="#031414" stroke-width="0.7"/>
<path d="M16.90 18.50 H23.20 L26.00 16.20 H19.70 Z" fill="#9ef8f8" stroke="#031414" stroke-width="0.7"/>
<rect x="16.90" y="18.50" width="6.30" height="6.30" fill="#3fe0e0" stroke="#031414" stroke-width="0.7"/>
<rect x="18.20" y="19.80" width="1.8" height="1.8" fill="#e8ffff"/>
<path d="M29.50 24.80 L32.30 22.50 V16.20 L29.50 18.50 Z" fill="#0f8c8c" stroke="#031414" stroke-width="0.7"/>
<path d="M23.20 18.50 H29.50 L32.30 16.20 H26.00 Z" fill="#9ef8f8" stroke="#031414" stroke-width="0.7"/>
<rect x="23.20" y="18.50" width="6.30" height="6.30" fill="#3fe0e0" stroke="#031414" stroke-width="0.7"/>
<rect x="24.50" y="19.80" width="1.8" height="1.8" fill="#e8ffff"/>
<path d="M14.10 39.70 L16.90 37.40 V31.10 L14.10 33.40 Z" fill="#0f8c8c" stroke="#031414" stroke-width="0.7"/>
<path d="M7.80 33.40 H14.10 L16.90 31.10 H10.60 Z" fill="#9ef8f8" stroke="#031414" stroke-width="0.7"/>
<rect x="7.80" y="33.40" width="6.30" height="6.30" fill="#3fe0e0" stroke="#031414" stroke-width="0.7"/>
<rect x="9.10" y="34.70" width="1.8" height="1.8" fill="#e8ffff"/>
<path d="M20.40 39.70 L23.20 37.40 V31.10 L20.40 33.40 Z" fill="#0f8c8c" stroke="#031414" stroke-width="0.7"/>
<path d="M14.10 33.40 H20.40 L23.20 31.10 H16.90 Z" fill="#9ef8f8" stroke="#031414" stroke-width="0.7"/>
<rect x="14.10" y="33.40" width="6.30" height="6.30" fill="#3fe0e0" stroke="#031414" stroke-width="0.7"/>
<rect x="15.40" y="34.70" width="1.8" height="1.8" fill="#e8ffff"/>
<path d="M26.70 39.70 L29.50 37.40 V31.10 L26.70 33.40 Z" fill="#0f8c8c" stroke="#031414" stroke-width="0.7"/>
<path d="M20.40 33.40 H26.70 L29.50 31.10 H23.20 Z" fill="#9ef8f8" stroke="#031414" stroke-width="0.7"/>
<rect x="20.40" y="33.40" width="6.30" height="6.30" fill="#3fe0e0" stroke="#031414" stroke-width="0.7"/>
<rect x="21.70" y="34.70" width="1.8" height="1.8" fill="#e8ffff"/>
<path d="M14.10 33.40 L16.90 31.10 V24.80 L14.10 27.10 Z" fill="#0f8c8c" stroke="#031414" stroke-width="0.7"/>
<path d="M7.80 27.10 H14.10 L16.90 24.80 H10.60 Z" fill="#9ef8f8" stroke="#031414" stroke-width="0.7"/>
<rect x="7.80" y="27.10" width="6.30" height="6.30" fill="#3fe0e0" stroke="#031414" stroke-width="0.7"/>
<rect x="9.10" y="28.40" width="1.8" height="1.8" fill="#e8ffff"/>
<path d="M20.40 33.40 L23.20 31.10 V24.80 L20.40 27.10 Z" fill="#0f8c8c" stroke="#031414" stroke-width="0.7"/>
<path d="M14.10 27.10 H20.40 L23.20 24.80 H16.90 Z" fill="#9ef8f8" stroke="#031414" stroke-width="0.7"/>
<rect x="14.10" y="27.10" width="6.30" height="6.30" fill="#3fe0e0" stroke="#031414" stroke-width="0.7"/>
<rect x="15.40" y="28.40" width="1.8" height="1.8" fill="#e8ffff"/>
<path d="M26.70 33.40 L29.50 31.10 V24.80 L26.70 27.10 Z" fill="#0f8c8c" stroke="#031414" stroke-width="0.7"/>
<path d="M20.40 27.10 H26.70 L29.50 24.80 H23.20 Z" fill="#9ef8f8" stroke="#031414" stroke-width="0.7"/>
<rect x="20.40" y="27.10" width="6.30" height="6.30" fill="#3fe0e0" stroke="#031414" stroke-width="0.7"/>
<rect x="21.70" y="28.40" width="1.8" height="1.8" fill="#e8ffff"/>
<path d="M14.10 27.10 L16.90 24.80 V18.50 L14.10 20.80 Z" fill="#0f8c8c" stroke="#031414" stroke-width="0.7"/>
<path d="M7.80 20.80 H14.10 L16.90 18.50 H10.60 Z" fill="#9ef8f8" stroke="#031414" stroke-width="0.7"/>
<rect x="7.80" y="20.80" width="6.30" height="6.30" fill="#3fe0e0" stroke="#031414" stroke-width="0.7"/>
<rect x="9.10" y="22.10" width="1.8" height="1.8" fill="#e8ffff"/>
<path d="M20.40 27.10 L23.20 24.80 V18.50 L20.40 20.80 Z" fill="#0f8c8c" stroke="#031414" stroke-width="0.7"/>
<path d="M14.10 20.80 H20.40 L23.20 18.50 H16.90 Z" fill="#9ef8f8" stroke="#031414" stroke-width="0.7"/>
<rect x="14.10" y="20.80" width="6.30" height="6.30" fill="#3fe0e0" stroke="#031414" stroke-width="0.7"/>
<rect x="15.40" y="22.10" width="1.8" height="1.8" fill="#e8ffff"/>
<path d="M11.30 42.00 L14.10 39.70 V33.40 L11.30 35.70 Z" fill="#0f8c8c" stroke="#031414" stroke-width="0.7"/>
<path d="M5.00 35.70 H11.30 L14.10 33.40 H7.80 Z" fill="#9ef8f8" stroke="#031414" stroke-width="0.7"/>
<rect x="5.00" y="35.70" width="6.30" height="6.30" fill="#3fe0e0" stroke="#031414" stroke-width="0.7"/>
<rect x="6.30" y="37.00" width="1.8" height="1.8" fill="#e8ffff"/>
<path d="M17.60 42.00 L20.40 39.70 V33.40 L17.60 35.70 Z" fill="#0f8c8c" stroke="#031414" stroke-width="0.7"/>
<path d="M11.30 35.70 H17.60 L20.40 33.40 H14.10 Z" fill="#9ef8f8" stroke="#031414" stroke-width="0.7"/>
<rect x="11.30" y="35.70" width="6.30" height="6.30" fill="#3fe0e0" stroke="#031414" stroke-width="0.7"/>
<rect x="12.60" y="37.00" width="1.8" height="1.8" fill="#e8ffff"/>
<path d="M23.90 42.00 L26.70 39.70 V33.40 L23.90 35.70 Z" fill="#0f8c8c" stroke="#031414" stroke-width="0.7"/>
<path d="M17.60 35.70 H23.90 L26.70 33.40 H20.40 Z" fill="#9ef8f8" stroke="#031414" stroke-width="0.7"/>
<rect x="17.60" y="35.70" width="6.30" height="6.30" fill="#3fe0e0" stroke="#031414" stroke-width="0.7"/>
<rect x="18.90" y="37.00" width="1.8" height="1.8" fill="#e8ffff"/>
<path d="M11.30 35.70 L14.10 33.40 V27.10 L11.30 29.40 Z" fill="#0f8c8c" stroke="#031414" stroke-width="0.7"/>
<path d="M5.00 29.40 H11.30 L14.10 27.10 H7.80 Z" fill="#9ef8f8" stroke="#031414" stroke-width="0.7"/>
<rect x="5.00" y="29.40" width="6.30" height="6.30" fill="#3fe0e0" stroke="#031414" stroke-width="0.7"/>
<rect x="6.30" y="30.70" width="1.8" height="1.8" fill="#e8ffff"/>
<path d="M17.60 35.70 L20.40 33.40 V27.10 L17.60 29.40 Z" fill="#0f8c8c" stroke="#031414" stroke-width="0.7"/>
<path d="M11.30 29.40 H17.60 L20.40 27.10 H14.10 Z" fill="#9ef8f8" stroke="#031414" stroke-width="0.7"/>
<rect x="11.30" y="29.40" width="6.30" height="6.30" fill="#3fe0e0" stroke="#031414" stroke-width="0.7"/>
<rect x="12.60" y="30.70" width="1.8" height="1.8" fill="#e8ffff"/>
<path d="M11.30 29.40 L14.10 27.10 V20.80 L11.30 23.10 Z" fill="#0f8c8c" stroke="#031414" stroke-width="0.7"/>
<path d="M5.00 23.10 H11.30 L14.10 20.80 H7.80 Z" fill="#9ef8f8" stroke="#031414" stroke-width="0.7"/>
<rect x="5.00" y="23.10" width="6.30" height="6.30" fill="#3fe0e0" stroke="#031414" stroke-width="0.7"/>
<rect x="6.30" y="24.40" width="1.8" height="1.8" fill="#e8ffff"/>
<path d="M27.50 4.00 L31.70 8.20 L27.50 12.40 L23.30 8.20 Z" fill="#0f8c8c" stroke="#031414" stroke-width="0.7"/>
<path d="M27.50 4.00 L31.70 8.20 L27.50 9.40 L23.30 8.20 Z" fill="#6ef4f4"/>
<circle cx="26.90" cy="7.20" r="1" fill="#e8ffff"/>
<path d="M38.60 6.50 L42.80 10.70 L38.60 14.90 L34.40 10.70 Z" fill="#0f8c8c" stroke="#031414" stroke-width="0.7"/>
<path d="M38.60 6.50 L42.80 10.70 L38.60 11.90 L34.40 10.70 Z" fill="#6ef4f4"/>
<circle cx="38.00" cy="9.70" r="1" fill="#e8ffff"/>
<path d="M34.00 17.60 L38.20 21.80 L34.00 26.00 L29.80 21.80 Z" fill="#0f8c8c" stroke="#031414" stroke-width="0.7"/>
<path d="M34.00 17.60 L38.20 21.80 L34.00 23.00 L29.80 21.80 Z" fill="#6ef4f4"/>
<circle cx="33.40" cy="20.80" r="1" fill="#e8ffff"/>
</g>
</svg>
<div class="t" style="left:276px;top:98.3px;font-size:33px;line-height:38px;color:#fff;letter-spacing:-0.6px;-webkit-text-stroke:0.7px #fff">Registry</div>

<!-- processing panel -->
<div class="a" style="left:232px;top:158px;width:184px;height:402px;background:#d6dff7;border-radius:3px 3px 0 0;overflow:hidden">
  <div class="a" style="left:0;top:0;width:184px;height:25px;background:linear-gradient(to right,#fff 0%,#fff 35%,#c6d3f7 100%)"></div>
  <div class="a" style="left:182px;top:25px;width:1px;height:380px;background:#fff"></div>
</div>
<div class="t" style="left:244.5px;top:164.5px;font-weight:bold;font-size:11px;color:#1d52c4">Processing</div>
<div class="a" style="left:394.5px;top:162.5px;width:14px;height:14px;border-radius:50%;background:#fff;box-shadow:0 0.5px 1.5px 0.5px rgba(90,100,150,0.55)"></div>
<svg style="left:394.5px;top:162.5px" width="14" height="14"><path d="M4 6.5 L7 3.8 L10 6.5 M4 10 L7 7.3 L10 10" fill="none" stroke="#1a2f98" stroke-width="1.5"/></svg>
<div class="t" style="left:237px;top:376.2px;color:#666">No modules selected</div>

<!-- list -->
<div class="a" style="left:428px;top:146px;width:574px;height:414px;background:#fff"></div>
<div class="a" style="left:428px;top:146px;width:574px;height:19px;background:#fff;border-bottom:1px solid #e5e5e5"></div>
<div class="a" style="left:557px;top:147px;width:1px;height:17px;background:#e5e5e5"></div>
<div class="a" style="left:611px;top:147px;width:1px;height:17px;background:#e5e5e5"></div>
<div class="a" style="left:671px;top:147px;width:1px;height:17px;background:#e5e5e5"></div>
<div class="a" style="left:799px;top:147px;width:1px;height:17px;background:#e5e5e5"></div>
<div class="a" style="left:957px;top:147px;width:1px;height:17px;background:#e5e5e5"></div>
<div class="t" style="left:434.5px;top:149px">Name</div>
<div class="t" style="left:563.5px;top:149px">Order</div>
<div class="t" style="left:617px;top:149px">Action</div>
<div class="t" style="left:677px;top:149px">Hive</div>
<div class="t" style="left:805px;top:149px">Key</div>
<div class="t" style="left:963px;top:149px;width:39px;overflow:hidden">Value Name</div>
<div class="t" style="left:612px;top:175.8px;font-size:11.8px">There are no items to show in this view.</div>
<!-- list hscroll -->
<div class="a" style="left:428px;top:543px;width:574px;height:17px;background:#fff;border-top:1px solid #e0e0e0"></div>
<div class="a" style="left:445px;top:543.5px;width:375px;height:16px;background:#dadada;border:1px solid #c4c4c4"></div>
<svg style="left:428px;top:543px" width="574" height="17">
  <path d="M11 4.5 L7 8.5 L11 12.5" fill="none" stroke="#606060" stroke-width="1.2"/>
  <path d="M563 4.5 L567 8.5 L563 12.5" fill="none" stroke="#606060" stroke-width="1.2"/>
  <path d="M200.5 5 V12 M203.5 5 V12 M206.5 5 V12" stroke="#606060" stroke-width="1"/>
</svg>
<div class="a" style="left:985px;top:543.5px;width:1px;height:16px;background:#e0e0e0"></div>

<!-- left pane hscroll -->
<div class="a" style="left:12px;top:592px;width:203px;height:16px;background:#fff;border:1px solid #d8d8d8"></div>
<div class="a" style="left:29.5px;top:592px;width:79px;height:16px;background:#dadada;border:1px solid #c4c4c4"></div>
<div class="a" style="left:197px;top:592px;width:1px;height:16px;background:#e0e0e0"></div>
<svg style="left:12px;top:592px" width="203" height="16">
  <path d="M11 4 L7 8 L11 12" fill="none" stroke="#606060" stroke-width="1.2"/>
  <path d="M192 4 L196 8 L192 12" fill="none" stroke="#606060" stroke-width="1.2"/>
  <path d="M53.5 5 V11 M56.5 5 V11 M59.5 5 V11" stroke="#606060" stroke-width="1"/>
</svg>

<!-- ============ TAB BAR ============ -->
<div class="a" style="left:216px;top:589.5px;width:798px;height:21.5px;background:#f0f0f0;border-top:1.5px solid #fafafa"></div>
<div class="a" style="left:216px;top:591px;width:798px;height:1.5px;background:#a8a8a8"></div>
<div class="a" style="left:11px;top:609.5px;width:1003px;height:1.5px;background:#b0b0b0"></div>
<svg style="left:0;top:0" width="440" height="612">
  <path d="M297.5 591.5 L306.6 609.5 H361 L369.5 591.5 Z" fill="#ececec"/>
  <path d="M297.5 591.5 L306.6 609.5 M361 609.5 L369.5 591.5" fill="none" stroke="#3a3a3a" stroke-width="1"/>
  <path d="M362.7 591.5 L370.6 609.5 H422.5 L430 591.5 Z" fill="#ececec"/>
  <path d="M362.7 591.5 L370.6 609.5 M422.5 609.5 L430 591.5" fill="none" stroke="#3a3a3a" stroke-width="1"/>
  <path d="M218.5 589.5 L227 609.5 H297 L305.5 589.5 Z" fill="#fff"/>
  <path d="M218.5 591.5 L227 609.5 M297 609.5 L305.2 591" fill="none" stroke="#3a3a3a" stroke-width="1"/>
</svg>
<div class="t" style="left:232px;top:594px;font-size:11px">Preferences</div>
<div class="t" style="left:309.5px;top:594px;font-size:11px">Extended</div>
<div class="t" style="left:373.5px;top:594px;font-size:11px">Standard</div>

<!-- ============ STATUS BAR ============ -->
<div class="a" style="left:12px;top:611px;width:1000px;height:21px;background:#fdfdfd"></div>
<div class="a" style="left:927px;top:613px;width:1px;height:19px;background:#d8d8d8"></div>
<div class="a" style="left:1011px;top:613px;width:1px;height:19px;background:#d8d8d8"></div>
<div class="t" style="left:13px;top:615.6px;font-size:11.7px">Add a new registry item</div>

<!-- ============ CONTEXT MENU ============ -->
<div class="a" style="left:139px;top:313px;width:151px;height:191px;background:#f0f0f0;border:1px solid #a0a0a0;box-shadow:1px 1px 2px rgba(0,0,0,0.25)"></div>
<div class="a" style="left:168px;top:338px;width:1px;height:164px;background:#d4d4d4"></div>
<div class="a" style="left:141px;top:315.5px;width:143.5px;height:21.5px;background:#dcebfc;border:1.5px solid #52ace2;border-radius:2px;box-shadow:inset 0 0 0 1px #f4f9fe"></div>
<div class="a" style="left:169px;top:360px;width:116px;height:1px;background:#d4d4d4"></div>
<div class="a" style="left:169px;top:386px;width:116px;height:1px;background:#d4d4d4"></div>
<div class="a" style="left:169px;top:477px;width:116px;height:1px;background:#d4d4d4"></div>
<div class="t" style="font-size:11.6px;left:172.3px;top:319px">New</div>
<div class="t" style="font-size:11.6px;left:172.3px;top:340.6px">All Tasks</div>
<div class="t" style="font-size:11.6px;left:172.3px;top:366px">View</div>
<div class="t" style="font-size:11.6px;left:172.3px;top:392.6px">Copy</div>
<div class="t" style="font-size:11.6px;left:172.3px;top:413.6px">Print</div>
<div class="t" style="font-size:11.6px;left:172.3px;top:435.4px">Refresh</div>
<div class="t" style="font-size:11.6px;left:172.3px;top:457.2px">Export List...</div>
<div class="t" style="font-size:11.6px;left:172.3px;top:482.8px">Help</div>
<svg style="left:270px;top:318px" width="12" height="70">
  <path d="M4.5 4 L8.5 8 L4.5 12 Z" fill="#000"/>
  <path d="M4.5 26 L8.5 30 L4.5 34 Z" fill="#000"/>
  <path d="M4.5 51 L8.5 55 L4.5 59 Z" fill="#000"/>
</svg>

<!-- submenu -->
<div class="a" style="left:284px;top:313px;width:169px;height:70.5px;background:#f0f0f0;border:1px solid #a0a0a0;box-shadow:1px 1px 2px rgba(0,0,0,0.25)"></div>
<div class="a" style="left:314px;top:338px;width:1px;height:43px;background:#d4d4d4"></div>
<div class="a" style="left:287px;top:315.5px;width:163.5px;height:21.5px;background:#dcebfc;border:1.5px solid #52ace2;border-radius:2px;box-shadow:inset 0 0 0 1px #f4f9fe"></div>
<div class="t" style="font-size:11.6px;left:317.3px;top:319.1px">Registry Item</div>
<div class="t" style="font-size:11.6px;left:317.3px;top:341.1px">Collection Item</div>
<div class="t" style="font-size:11.6px;left:317.3px;top:362.6px">Registry Wizard</div>
</body></html>
